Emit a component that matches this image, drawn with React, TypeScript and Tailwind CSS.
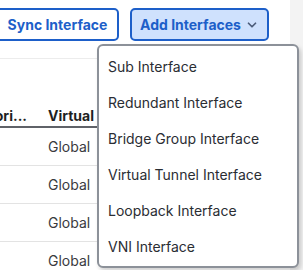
import { ChevronDown } from "lucide-react";

const menuItems = [
  "Sub Interface",
  "Redundant Interface",
  "Bridge Group Interface",
  "Virtual Tunnel Interface",
  "Loopback Interface",
  "VNI Interface",
];

const rows = ["Global", "Global", "Global", "Global"];

export default function App() {
  return (
    <div
      className="relative flex h-[270px] w-[303px] overflow-hidden bg-white"
      style={{ fontFamily: "Inter, 'Noto Sans', sans-serif" }}
    >
      <div className="flex min-w-0 flex-1 flex-col">
        <div className="flex h-[59px] shrink-0 items-start justify-end gap-[11px] border-b border-[#ececec] pt-[8px] pr-[21px]">
          <button className="flex h-[33px] w-[123px] shrink-0 items-center justify-center rounded-[5px] border-2 border-[#1d5fc9] bg-white text-[14px] font-bold text-[#1d5fc9]">
            Sync Interface
          </button>
          <button className="flex h-[33px] w-[139px] shrink-0 items-center justify-center gap-[4px] rounded-[5px] border-2 border-[#1d5fc9] bg-[#cfe1fd] text-[14px] font-bold text-[#1d5fc9]">
            Add Interfaces
            <ChevronDown className="h-[14px] w-[14px] text-[#4d5d7a]" strokeWidth={3} />
          </button>
        </div>
        <div className="h-[47px] shrink-0" />
        <div className="flex h-[22px] items-center border-b-2 border-[#5f6268] pb-[2px] text-[14px] font-bold text-[#1e1f22]">
          <div className="flex w-[48px] shrink-0 justify-end whitespace-nowrap pr-[21px]">
            <span className="shrink-0">ori...</span>
          </div>
          <div>Virtual</div>
        </div>
        {rows.map((r, i) => (
          <div
            key={i}
            className="flex h-[38px] shrink-0 items-center border-b border-[#e3e3e3] text-[14px] text-[#3a3b3e]"
          >
            <div className="w-[48px] shrink-0" />
            <div>{r}</div>
          </div>
        ))}
      </div>
      <div className="w-[13px] shrink-0 bg-[#f3f3f3]" />
      <div className="absolute left-[97px] top-[44px] w-[202px] rounded-[6px] border-2 border-[#8c9199] bg-white py-[2px] shadow-[2px_3px_4px_rgba(0,0,0,0.18)]">
        {menuItems.map((m) => (
          <div
            key={m}
            className="flex h-[36px] items-center px-[9px] text-[14px] text-[#2a2d33]"
          >
            {m}
          </div>
        ))}
      </div>
    </div>
  );
}
